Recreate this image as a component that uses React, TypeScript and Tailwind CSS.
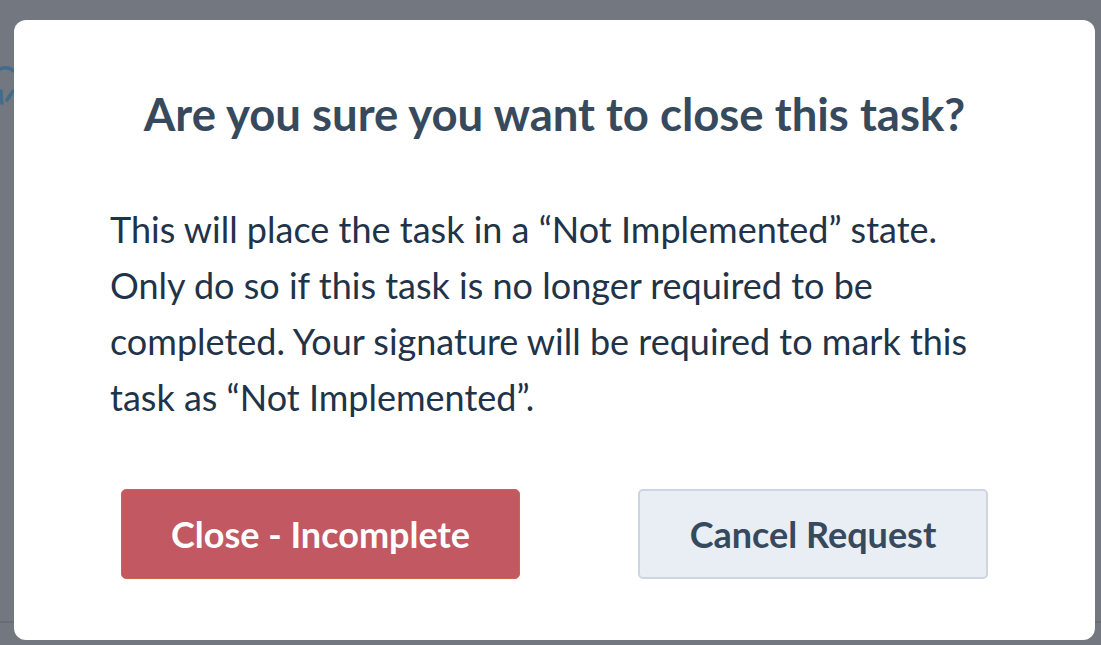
import React from 'react';

const App: React.FC = () => {
  return (
    <div className="relative w-[1101px] h-[645px] overflow-hidden bg-[#737780] font-['Lato',sans-serif]">
      {/* faint page content under the overlay */}
      <svg className="absolute left-0 top-[60px]" width="14" height="50" viewBox="0 0 14 50">
        <path d="M-2 10 Q7 5 14 11" fill="none" stroke="#3f6d8b" strokeWidth="3.5" strokeLinecap="round" />
        <path d="M1 31 Q1 39 2 43" fill="none" stroke="#3f6d8b" strokeWidth="3.5" strokeLinecap="round" />
        <path d="M7 40 L13 31" stroke="#3f6d8b" strokeWidth="3.5" strokeLinecap="round" />
      </svg>
      <div className="absolute left-0 right-0 top-[621px] h-[2px] bg-[#686c75]" />

      <div className="relative ml-[14px] mt-[20px] w-[1081px] h-[620px] rounded-[12px] bg-white flex flex-col items-center">
        <h2 className="mt-[66px] text-[45.5px] leading-[56px] font-bold text-[#374a5d] text-center">
          Are you sure you want to close this task?
        </h2>
        <p className="mt-[59px] self-start ml-[96px] w-[880px] text-[36px] leading-[56px] text-[#1f3349]">
          This will place the task in a “Not Implemented” state. Only do so if this task is no longer required to be
          completed. Your signature will be required to mark this task as “Not Implemented”.
        </p>
        <div className="mt-[64px] self-start ml-[107px] flex gap-[118px]">
          <button className="w-[399px] h-[90px] rounded-[5px] bg-[#c15862] border border-[#cc6550] text-white text-[36px] font-bold">
            Close - Incomplete
          </button>
          <button className="w-[350px] h-[90px] rounded-[5px] bg-[#e9eef5] border-2 border-[#ccd5e0] text-[#374a5d] text-[36px] font-bold">
            Cancel Request
          </button>
        </div>
      </div>
    </div>
  );
};

export default App;
